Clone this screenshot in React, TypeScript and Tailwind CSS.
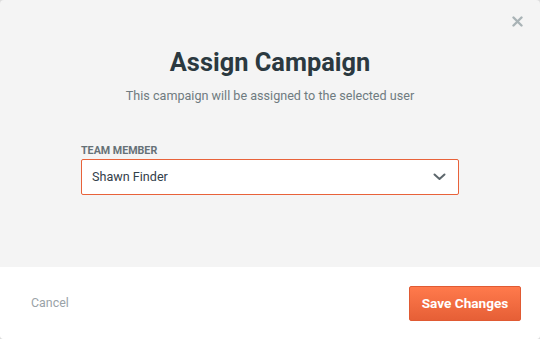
import React from 'react';

export default function App() {
  return (
    <div className="w-[540px] h-[339px] bg-[#dcdcdc] font-['Roboto',sans-serif]">
      <div className="relative flex h-full w-full flex-col overflow-hidden rounded-[4px] bg-[#f4f4f4]">
        <button className="absolute right-[17px] top-[16px] text-[#a9b3b6]">
          <svg width="11" height="11" viewBox="0 0 11 11">
            <path d="M1.5 1.5 L9.5 9.5 M9.5 1.5 L1.5 9.5" stroke="currentColor" strokeWidth="2.4" strokeLinecap="round" />
          </svg>
        </button>

        <div className="flex flex-1 flex-col items-center pt-[45px]">
          <h2 className="text-[25.4px] font-bold leading-[34px] text-[#2b3940]">Assign Campaign</h2>
          <p className="mt-[9px] text-[12.6px] leading-[16px] text-[#6f7b80]">
            This campaign will be assigned to the selected user
          </p>

          <div className="mt-[40px] w-[378px]">
            <label className="block text-[10.7px] font-bold uppercase leading-[13px] text-[#667177]">Team Member</label>
            <div className="mt-[2px] flex h-[36px] items-center justify-between rounded-[2px] border border-[#e8623a] bg-white pl-[10px] pr-[12px]">
              <span className="text-[12.6px] text-[#33404a]">Shawn Finder</span>
              <svg width="13" height="8" viewBox="0 0 13 8" className="text-[#5d676c]">
                <path d="M1.5 1.5 L6.5 6 L11.5 1.5" fill="none" stroke="currentColor" strokeWidth="2" strokeLinecap="round" strokeLinejoin="round" />
              </svg>
            </div>
          </div>
        </div>

        <div className="flex h-[72px] items-center justify-between bg-white pl-[31px] pr-[19px]">
          <button className="text-[12.4px] text-[#9aa3a8]">Cancel</button>
          <button className="h-[35px] w-[112px] rounded-[2px] border border-[#e05a33] bg-gradient-to-b from-[#ff7a4c] to-[#e65f36] text-[13.6px] font-bold text-white">
            Save Changes
          </button>
        </div>
      </div>
    </div>
  );
}
